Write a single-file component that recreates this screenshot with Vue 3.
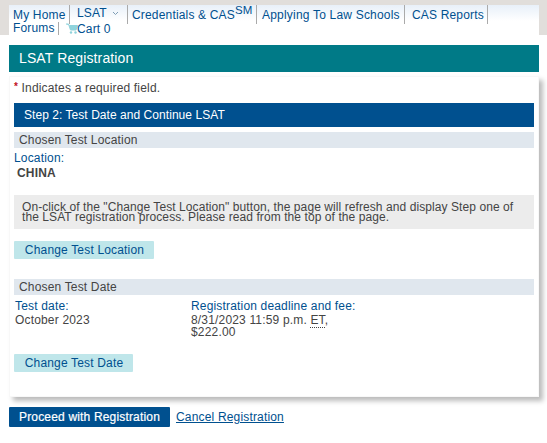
<template>
  <div class="page">
    <nav class="topbar">
      <div class="nav">
        <ul class="nav-row">
          <li class="nav-item my-home"><a>My Home</a></li>
          <li class="nav-item lsat">
            <a>LSAT</a>
            <svg class="caret" width="7" height="5" viewBox="0 0 7 5"><path d="M1 1l2.5 2.5L6 1" fill="none" stroke="#7f9db5" stroke-width="1" /></svg>
          </li>
          <li class="nav-item cred"><a>Credentials &amp; CAS<sup>SM</sup></a></li>
          <li class="nav-item apply"><a>Applying To Law Schools</a></li>
          <li class="nav-item reports"><a>CAS Reports</a></li>
        </ul>
        <ul class="nav-row second">
          <li class="nav-item forums"><a>Forums</a></li>
          <li class="nav-item cart">
            <svg class="cart-icon" width="12" height="11" viewBox="0 0 12 11">
              <path d="M0 1h2.5l2 6h5.5l1.5-4.5H3.5" fill="#8fd3dc" stroke="#8fd3dc" stroke-width="1" />
              <circle cx="5" cy="9.5" r="1.2" fill="#8fd3dc" />
              <circle cx="9.5" cy="9.5" r="1.2" fill="#8fd3dc" />
            </svg>
            <a>Cart 0</a>
          </li>
        </ul>
      </div>
    </nav>

    <main class="content">
      <h1 class="page-title">LSAT Registration</h1>

      <section class="card">
        <p class="required"><span class="star">*</span> Indicates a required field.</p>
        <h2 class="step">Step 2: Test Date and Continue LSAT</h2>

        <h3 class="section-head">Chosen Test Location</h3>
        <div class="label location-label">Location:</div>
        <div class="country">CHINA</div>
        <p class="notice">
          On-click of the "Change Test Location" button, the page will refresh and display Step one of
          the LSAT registration process. Please read from the top of the page.
        </p>
        <button class="btn-light location-btn">Change Test Location</button>

        <h3 class="section-head date-head">Chosen Test Date</h3>
        <div class="date-row">
          <div class="date-col">
            <div class="label">Test date:</div>
            <div class="value">October 2023</div>
          </div>
          <div class="fee-col">
            <div class="label">Registration deadline and fee:</div>
            <div class="value">8/31/2023 11:59 p.m. <abbr class="et">ET</abbr>,<br />$222.00</div>
          </div>
        </div>
        <button class="btn-light date-btn">Change Test Date</button>
      </section>

      <div class="actions">
        <button class="btn-primary">Proceed with Registration</button>
        <a class="cancel">Cancel Registration</a>
      </div>
    </main>
  </div>
</template>

<script setup>
</script>

<style>
html,
body {
  background: #fff;
}
</style>

<style scoped>
.page {
  width: 547px;
  height: 443px;
  overflow: hidden;
  font-family: "Liberation Sans", Arial, sans-serif;
  font-size: 12px;
  letter-spacing: 0.17px;
  color: #444;
  background: #fff;
}

.topbar {
  height: 35px;
  padding: 5px 8px 0 9px;
  box-sizing: border-box;
  background: #e1dedb;
}

.nav {
  height: 30px;
  padding-left: 4px;
  background: linear-gradient(#e8f0f9, #fff 16px);
  color: #00508f;
  line-height: 12px;
}

.nav-row {
  display: flex;
  margin: 0;
  padding: 0;
  list-style: none;
}

.second {
  margin-top: -2px;
}

.nav-item {
  box-sizing: border-box;
  height: 19px;
  padding-top: 4px;
  white-space: nowrap;
  border-right: 1px solid #aaa;
}

.my-home {
  width: 57px;
}

.lsat {
  width: 58px;
  padding-left: 7px;
}

.lsat a {
  position: relative;
  top: -2px;
}

.caret {
  position: relative;
  top: -3px;
  margin-left: 5px;
}

.cred {
  width: 129px;
  padding-left: 4px;
}

.cred sup {
  position: relative;
  top: -5px;
  vertical-align: baseline;
  font-size: 11.5px;
  line-height: 0;
}

.apply {
  width: 148px;
  padding-left: 5px;
  letter-spacing: 0.2px;
}

.reports {
  width: 83px;
  padding-left: 7px;
}

.forums {
  width: 46px;
  height: 13px;
  padding-top: 0;
}

.cart {
  display: flex;
  align-items: center;
  height: 13px;
  padding: 0 0 0 7px;
  border-right: none;
}

.cart-icon {
  margin-right: -1px;
}

.content {
  padding: 10px 8px 0 9px;
}

.page-title {
  margin: 0;
  height: 27px;
  padding-left: 10px;
  background: #007a87;
  color: #fff;
  font-size: 14px;
  font-weight: normal;
  letter-spacing: 0.12px;
  line-height: 27px;
}

.card {
  box-sizing: border-box;
  height: 321px;
  margin-top: 4px;
  padding: 4px 4px 0;
  border: 1px solid #f8f8f8;
  background: #fff;
  box-shadow: 4px 4px 5px #bbb;
}

.required {
  margin: 0;
  height: 22px;
  line-height: 15px;
}

.star {
  position: relative;
  top: -2px;
  color: #c1121f;
  font-weight: bold;
  font-size: 10px;
}

.step {
  margin: 0;
  height: 24px;
  padding-left: 10px;
  background: #00508f;
  color: #fff;
  font-size: 12px;
  font-weight: normal;
  letter-spacing: 0.05px;
  line-height: 24px;
}

.section-head {
  margin: 5px 0 0;
  height: 16px;
  padding-left: 5px;
  background: #e0e7ee;
  color: #444;
  font-size: 12px;
  font-weight: normal;
  line-height: 16px;
}

.label {
  color: #00508f;
  line-height: 12px;
}

.location-label {
  margin-top: 4px;
}

.country {
  margin-top: 2px;
  padding-left: 3px;
  font-weight: bold;
  line-height: 14px;
}

.notice {
  margin: 15px 0 0;
  height: 34px;
  box-sizing: border-box;
  padding: 7px 8px 0;
  background: #ececec;
  letter-spacing: 0.08px;
  line-height: 10px;
}

.btn-light {
  display: block;
  height: 18px;
  padding: 0 0 0 1px;
  border: none;
  border-radius: 1px;
  background: #bfe6ea;
  color: #00508f;
  font: 12px/18px "Liberation Sans", Arial, sans-serif;
  letter-spacing: inherit;
}

.location-btn {
  width: 140px;
  margin-top: 12px;
}

.date-head {
  margin-top: 20px;
}

.date-row {
  display: flex;
  margin-top: 5px;
  padding-left: 1px;
}

.date-col {
  width: 176px;
}

.value {
  margin-top: 2px;
  line-height: 12px;
}

.et {
  border-bottom: 1px dotted #444;
  text-decoration: none;
}

.date-btn {
  width: 119px;
  margin-top: 16px;
}

.actions {
  display: flex;
  align-items: center;
  gap: 6px;
  margin-top: 10px;
}

.btn-primary {
  width: 161px;
  height: 20px;
  padding: 0;
  border: none;
  border-radius: 1px;
  background: #00508f;
  color: #fff;
  font: 12px/20px "Liberation Sans", Arial, sans-serif;
  letter-spacing: inherit;
  -webkit-text-stroke: 0.2px #fff;
}

.cancel {
  color: #00508f;
  text-decoration: underline;
}
</style>
